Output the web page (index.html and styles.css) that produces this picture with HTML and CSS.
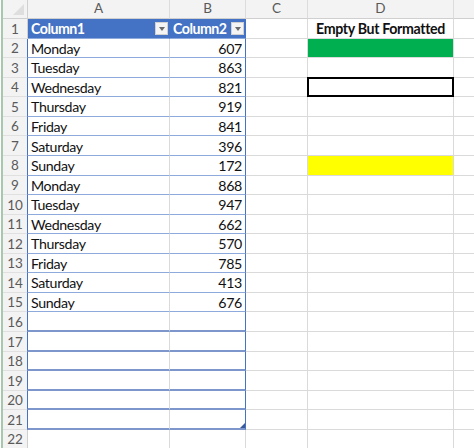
FILE: index.html
```html
<!DOCTYPE html>
<html>
<head>
<meta charset="utf-8">
<link rel="stylesheet" href="styles.css">
</head>
<body>
<div class="sheet">
  <div class="c corner"><span class="tri"></span></div>
  <div class="c colh">A</div><div class="c colh">B</div><div class="c colh">C</div><div class="c colh">D</div><div class="c colh last"></div>

  <div class="c rowh">1</div>
  <div class="c th tl">Column1<span class="dd"></span></div>
  <div class="c th tr">Column2<span class="dd"></span></div>
  <div class="c"></div><div class="c dh">Empty But Formatted</div><div class="c last"></div>

  <div class="c rowh">2</div><div class="c ta">Monday</div><div class="c tb">607</div><div class="c"></div><div class="c green"></div><div class="c last"></div>
  <div class="c rowh">3</div><div class="c ta">Tuesday</div><div class="c tb">863</div><div class="c"></div><div class="c"></div><div class="c last"></div>
  <div class="c rowh">4</div><div class="c ta">Wednesday</div><div class="c tb">821</div><div class="c"></div><div class="c boxed"></div><div class="c last"></div>
  <div class="c rowh">5</div><div class="c ta">Thursday</div><div class="c tb">919</div><div class="c"></div><div class="c"></div><div class="c last"></div>
  <div class="c rowh">6</div><div class="c ta">Friday</div><div class="c tb">841</div><div class="c"></div><div class="c"></div><div class="c last"></div>
  <div class="c rowh">7</div><div class="c ta">Saturday</div><div class="c tb">396</div><div class="c"></div><div class="c"></div><div class="c last"></div>
  <div class="c rowh">8</div><div class="c ta">Sunday</div><div class="c tb">172</div><div class="c"></div><div class="c yellow"></div><div class="c last"></div>
  <div class="c rowh">9</div><div class="c ta">Monday</div><div class="c tb">868</div><div class="c"></div><div class="c"></div><div class="c last"></div>
  <div class="c rowh">10</div><div class="c ta">Tuesday</div><div class="c tb">947</div><div class="c"></div><div class="c"></div><div class="c last"></div>
  <div class="c rowh">11</div><div class="c ta">Wednesday</div><div class="c tb">662</div><div class="c"></div><div class="c"></div><div class="c last"></div>
  <div class="c rowh">12</div><div class="c ta">Thursday</div><div class="c tb">570</div><div class="c"></div><div class="c"></div><div class="c last"></div>
  <div class="c rowh">13</div><div class="c ta">Friday</div><div class="c tb">785</div><div class="c"></div><div class="c"></div><div class="c last"></div>
  <div class="c rowh">14</div><div class="c ta">Saturday</div><div class="c tb">413</div><div class="c"></div><div class="c"></div><div class="c last"></div>
  <div class="c rowh">15</div><div class="c ta">Sunday</div><div class="c tb">676</div><div class="c"></div><div class="c"></div><div class="c last"></div>
  <div class="c rowh">16</div><div class="c ta em"></div><div class="c tb em"></div><div class="c"></div><div class="c"></div><div class="c last"></div>
  <div class="c rowh">17</div><div class="c ta em"></div><div class="c tb em"></div><div class="c"></div><div class="c"></div><div class="c last"></div>
  <div class="c rowh">18</div><div class="c ta em"></div><div class="c tb em"></div><div class="c"></div><div class="c"></div><div class="c last"></div>
  <div class="c rowh">19</div><div class="c ta em"></div><div class="c tb em"></div><div class="c"></div><div class="c"></div><div class="c last"></div>
  <div class="c rowh">20</div><div class="c ta em"></div><div class="c tb em"></div><div class="c"></div><div class="c"></div><div class="c last"></div>
  <div class="c rowh">21</div><div class="c ta em"></div><div class="c tb em end"><span class="grip"></span></div><div class="c"></div><div class="c"></div><div class="c last"></div>
  <div class="c rowh">22</div><div class="c"></div><div class="c"></div><div class="c"></div><div class="c"></div><div class="c last"></div>
</div>
</body>
</html>
```

FILE: styles.css
```css
html, body {
  margin: 0;
  padding: 0;
  background: #fff;
}
.sheet {
  display: grid;
  grid-template-columns: 25px 142px 76px 62px 146px 1fr;
  grid-template-rows: 19px repeat(22, 19.57px);
  width: 471px;
  height: 448px;
  margin-left: 1px;
  border-left: 2px solid #a8c8ad;
  font-family: Lato, "Open Sans", sans-serif;
  font-size: 14.2px;
  letter-spacing: -0.35px;
  color: #111;
  overflow: hidden;
}
.c {
  box-sizing: border-box;
  border-right: 1px solid #dadada;
  border-bottom: 1px solid #dadada;
  display: flex;
  align-items: center;
  padding: 0 3px;
  white-space: nowrap;
  position: relative;
  line-height: 1;
}
.c.last {
  border-right: none;
}
.corner {
  background: #f3f3f3;
  border-right: 1px solid #cfcfcf;
  border-bottom: 1px solid #cfcfcf;
}
.tri {
  position: absolute;
  right: 3px;
  bottom: 3px;
  width: 0;
  height: 0;
  border-left: 11px solid transparent;
  border-bottom: 11px solid #dedede;
}
.colh {
  background: #f3f3f3;
  justify-content: center;
  color: #5a5a5a;
  font-size: 13.5px;
  letter-spacing: 0;
  border-bottom: 1px solid #cfcfcf;
  border-right: 1px solid #dcdcdc;
}
.rowh {
  background: #f3f3f3;
  justify-content: center;
  color: #5a5a5a;
  font-size: 13.5px;
  letter-spacing: 0;
  padding: 2px 0 0 0;
  border-right: 1px solid #cfcfcf;
  border-bottom: 1px solid #e0e0e0;
}
.th {
  background: #4472c4;
  color: #fff;
  font-weight: bold;
  letter-spacing: -0.5px;
  border-bottom: 1px solid #8ea9db;
  border-right: 1px solid #4472c4;
  padding-top: 2px;
}
.dd {
  position: absolute;
  right: 1px;
  top: 3px;
  width: 13px;
  height: 13px;
  box-sizing: border-box;
  background: #f4f4f4;
  border: 1px solid #d0d0d0;
}
.dd::after {
  content: "";
  position: absolute;
  left: 3px;
  top: 4px;
  border-left: 3px solid transparent;
  border-right: 3px solid transparent;
  border-top: 4px solid #6a6a6a;
}
.ta {
  border-left: 1px solid #4472c4;
  margin-left: -1px;
  border-bottom: 1px solid #8ea9db;
  border-right: 1px solid #dadada;
  padding-top: 2px;
}
.tb {
  justify-content: flex-end;
  border-bottom: 1px solid #8ea9db;
  border-right: 1px solid #4472c4;
  padding-top: 2px;
}
.ta.em, .tb.em {
  border-bottom: 2px solid #7d97cc;
}
.grip {
  position: absolute;
  right: 0;
  bottom: 0;
  width: 0;
  height: 0;
  border-left: 5px solid transparent;
  border-bottom: 5px solid #3a5a9c;
}
.dh {
  justify-content: center;
  font-weight: bold;
  color: #111;
  padding-top: 2px;
}
.green {
  background: #00b050;
}
.yellow {
  background: #ffff00;
}
.boxed {
  border: 2px solid #000;
  margin-top: -1px;
  margin-left: -1px;
}
```
